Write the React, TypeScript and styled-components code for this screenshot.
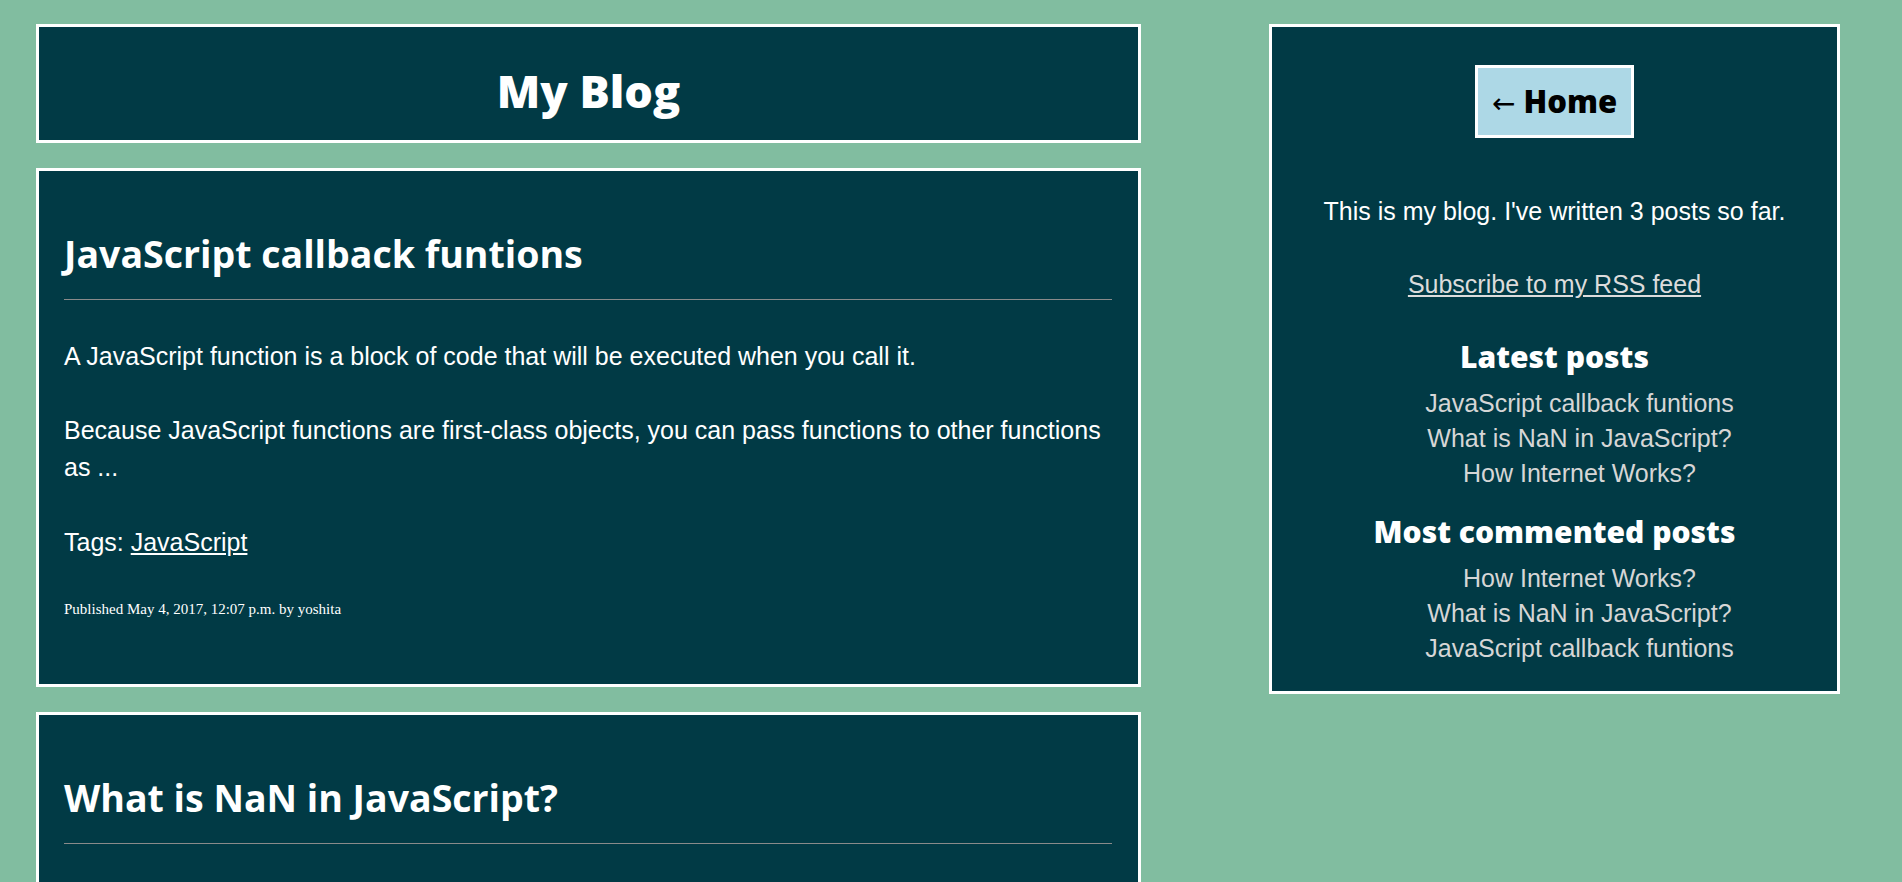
import React from "react";
import styled, { createGlobalStyle } from "styled-components";

const GlobalStyle = createGlobalStyle`
  html, body {
    margin: 0;
    padding: 0;
    background: #81bda0;
  }
  body {
    font-family: "Liberation Sans", Arial, sans-serif;
    color: #ffffff;
  }
`;

const Page = styled.div`
  display: flex;
  align-items: flex-start;
  padding: 24px 0 0 36px;
`;

const MainColumn = styled.main`
  width: 1105px;
  display: flex;
  flex-direction: column;
  gap: 25px;
`;

const Panel = styled.section`
  box-sizing: border-box;
  background: #013a45;
  border: 3px solid #ffffff;
`;

const Header = styled(Panel)`
  height: 119px;
  padding-top: 33px;
`;

const SiteTitle = styled.h1`
  margin: 0;
  text-align: center;
  font-family: "Open Sans", sans-serif;
  font-weight: 800;
  font-size: 45px;
  line-height: 61px;
  color: #ffffff;
`;

const PostCard = styled(Panel)`
  padding: 57px 26px 66px 25px;
`;

const PostTitle = styled.h2`
  margin: 0;
  font-family: "Open Sans", sans-serif;
  font-weight: 700;
  font-size: 37.5px;
  line-height: 51px;
  color: #ffffff;
`;

const Rule = styled.hr`
  margin: 20px 0 0;
  border: 0;
  border-top: 1px solid #8a8a8a;
  height: 0;
`;

const Excerpt = styled.div`
  margin-top: 38px;
`;

const BodyText = styled.p`
  margin: 0 0 37px;
  font-size: 25px;
  line-height: 37px;
  &:last-child {
    margin-bottom: 0;
  }
`;

const TagLine = styled.p<{ $gap: number }>`
  margin: ${(p) => p.$gap}px 0 0;
  font-size: 25px;
  line-height: 37px;
`;

const TagLink = styled.a`
  color: #ffffff;
  text-decoration: underline;
`;

const Meta = styled.p`
  margin: 39px 0 0;
  font-family: "Liberation Serif", "Times New Roman", serif;
  font-size: 15px;
  line-height: 18px;
  color: #ffffff;
`;

const Sidebar = styled(Panel)`
  width: 571px;
  margin-left: 128px;
  padding: 38px 0 25px;
  display: flex;
  flex-direction: column;
  align-items: center;
  text-align: center;
`;

const HomeButton = styled.a`
  display: inline-block;
  background: #add8e6;
  border: 3px solid #ffffff;
  padding: 12px 14px;
  font-family: "Open Sans", sans-serif;
  font-weight: 800;
  font-size: 31px;
  line-height: 43px;
  color: #000000;
  text-decoration: none;
`;

const Arrow = styled.span`
  font-weight: 400;
  font-family: "DejaVu Sans", sans-serif;
  font-size: 28px;
  line-height: 1;
`;

const SideText = styled.p<{ $top: number }>`
  margin: ${(p) => p.$top}px 0 0;
  font-size: 25px;
  line-height: 37px;
`;

const RssLink = styled.a`
  color: #dcdcdc;
  text-decoration: underline;
`;

const SideHeading = styled.h3<{ $top: number }>`
  margin: ${(p) => p.$top}px 0 0;
  font-family: "Open Sans", sans-serif;
  font-weight: 800;
  font-size: 30px;
  line-height: 41px;
  color: #ffffff;
`;

const PostList = styled.ul`
  list-style: none;
  margin: 9px 0 0;
  padding: 0 0 0 50px;
`;

const PostItem = styled.li`
  font-size: 25px;
  line-height: 35px;
  color: #d6d6d6;
`;

type Post = {
  title: string;
  paragraphs: string[];
  tag: string;
  meta: string;
};

const posts: Post[] = [
  {
    title: "JavaScript callback funtions",
    paragraphs: [
      "A JavaScript function is a block of code that will be executed when you call it.",
      "Because JavaScript functions are first-class objects, you can pass functions to other functions as ...",
    ],
    tag: "JavaScript",
    meta: "Published May 4, 2017, 12:07 p.m. by yoshita",
  },
  {
    title: "What is NaN in JavaScript?",
    paragraphs: [
      "NaN stands for Not a Number. It is a property of the global object.",
    ],
    tag: "JavaScript",
    meta: "Published May 4, 2017, 11:52 a.m. by yoshita",
  },
];

const latest = [
  "JavaScript callback funtions",
  "What is NaN in JavaScript?",
  "How Internet Works?",
];

const mostCommented = [
  "How Internet Works?",
  "What is NaN in JavaScript?",
  "JavaScript callback funtions",
];

export default function App() {
  return (
    <>
      <GlobalStyle />
      <Page>
        <MainColumn>
          <Header>
            <SiteTitle>My Blog</SiteTitle>
          </Header>
          {posts.map((post) => (
            <PostCard key={post.title}>
              <PostTitle>{post.title}</PostTitle>
              <Rule />
              <Excerpt>
                {post.paragraphs.map((p, i) => (
                  <BodyText key={i}>{p}</BodyText>
                ))}
              </Excerpt>
              <TagLine $gap={38}>
                Tags: <TagLink href="#">{post.tag}</TagLink>
              </TagLine>
              <Meta>{post.meta}</Meta>
            </PostCard>
          ))}
        </MainColumn>
        <Sidebar as="aside">
          <HomeButton href="#">
            <Arrow>←</Arrow> Home
          </HomeButton>
          <SideText $top={55}>This is my blog. I've written 3 posts so far.</SideText>
          <SideText $top={36}>
            <RssLink href="#">Subscribe to my RSS feed</RssLink>
          </SideText>
          <SideHeading $top={33}>Latest posts</SideHeading>
          <PostList>
            {latest.map((t) => (
              <PostItem key={t}>{t}</PostItem>
            ))}
          </PostList>
          <SideHeading $top={20}>Most commented posts</SideHeading>
          <PostList>
            {mostCommented.map((t) => (
              <PostItem key={t}>{t}</PostItem>
            ))}
          </PostList>
        </Sidebar>
      </Page>
    </>
  );
}
